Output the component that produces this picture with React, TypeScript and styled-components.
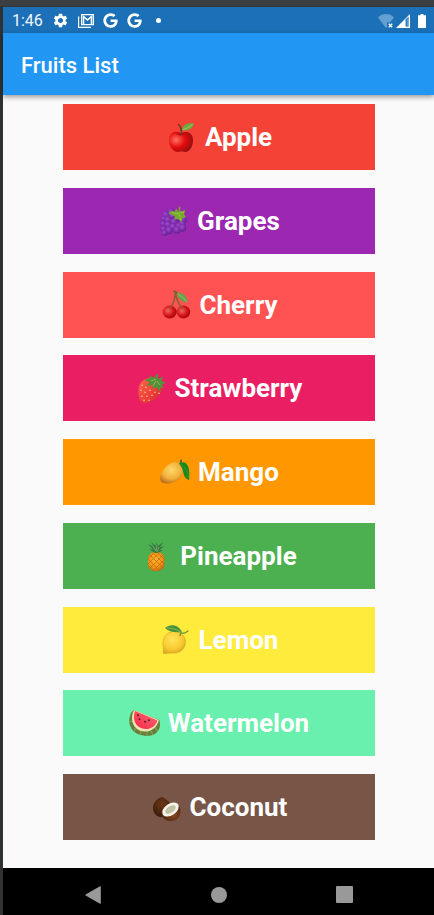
import React from "react";
import styled, { createGlobalStyle } from "styled-components";
import { MdSettings } from "react-icons/md";
import { FaGoogle } from "react-icons/fa";

const GlobalStyle = createGlobalStyle`
  * { box-sizing: border-box; }
  body { margin: 0; background: #fafafa; font-family: Roboto, sans-serif; }
`;

const Frame = styled.div`
  min-height: 100vh;
  display: flex;
  flex-direction: column;
  border-left: 3px solid #2f3133;
`;

const WindowEdge = styled.div`
  height: 7px;
  margin-left: -3px;
  background: #3c3f41;
  border-bottom: 1px solid #333638;
`;

const StatusBar = styled.div`
  height: 26px;
  display: flex;
  align-items: center;
  justify-content: space-between;
  padding: 1px 8px 0 9px;
  background: #1b70b7;
  color: #fff;
`;

const Notifications = styled.div`
  display: flex;
  align-items: center;
  gap: 9px;
`;

const Clock = styled.time`
  font-size: 16px;
  line-height: 20px;
  color: #f0f6fb;
`;

const Dot = styled.span`
  width: 5px;
  height: 5px;
  margin-left: 5px;
  border-radius: 50%;
  background: #fff;
`;

const Signals = styled.div`
  display: flex;
  align-items: center;
  gap: 2px;
`;

const AppBar = styled.header`
  height: 62px;
  display: flex;
  align-items: center;
  padding: 4px 18px 0;
  background: #2196f3;
  color: #fff;
  box-shadow: 0 2px 5px rgba(0, 0, 0, 0.4);
`;

const Title = styled.h1`
  margin: 0;
  font-size: 22px;
  line-height: 28px;
  font-weight: 500;
`;

const List = styled.main`
  flex: 1;
  display: flex;
  flex-direction: column;
  justify-content: space-between;
  gap: 8px;
  padding: 9px 59px 28px 60px;
`;

const FruitButton = styled.button<{ $color: string }>`
  height: 66px;
  display: flex;
  align-items: center;
  justify-content: center;
  gap: 7px;
  padding: 0;
  border: 0;
  background: ${(p) => p.$color};
  color: #fff;
  font: bold 26px/32px Roboto, sans-serif;
  cursor: pointer;
`;

const FruitIcon = styled.svg`
  width: 32px;
  height: 32px;
  flex: none;
`;

const NavBar = styled.nav`
  height: 47px;
  display: flex;
  align-items: center;
  justify-content: space-between;
  padding: 6px 66px 0 66px;
  background: #000;
`;

const NavButton = styled.button`
  width: 48px;
  height: 40px;
  display: flex;
  align-items: center;
  justify-content: center;
  padding: 0;
  border: 0;
  background: none;
  color: #999;
  cursor: pointer;
`;

const Apple = () => (
  <>
    <defs>
      <radialGradient id="apple" cx=".3" cy=".4" r=".75">
        <stop offset="0" stopColor="#ff7263" />
        <stop offset=".5" stopColor="#e40b0b" />
        <stop offset="1" stopColor="#8e1010" />
      </radialGradient>
    </defs>
    <path d="M15 12C11 9.500 3 10.500 3 19c0 6 4 12 9 12 1.500 0 2-.4 3.500-.4s2 .4 3.500.4c5 0 8-6 8-12 0-8-7-9.500-12-7z" fill="url(#apple)" />
    <path d="M11 12.500q4 2.500 8-.5" stroke="#8e1414" strokeWidth="1.500" fill="none" opacity=".7" />
    <path d="M12.500 3.500q3 2.500 3 9" stroke="#61402b" strokeWidth="1.600" fill="none" strokeLinecap="round" />
    <path d="M16 9c1-6 6-7.500 12-6.500-1 5-6 8-12 6.500z" fill="#6fa83f" />
    <path d="M17 8.500q5-1 9.500-5" stroke="#a8cf70" strokeWidth=".8" fill="none" />
  </>
);

const grapeDots: [number, number][] = [
  [13, 7], [8, 10], [14, 11], [20, 13], [25, 15], [5.5, 14], [10, 15], [24, 19],
  [16, 17], [20.5, 21.5], [5, 19], [10, 20], [15, 22], [19, 25], [5.5, 24], [11, 25.5], [6.5, 28], [24.5, 23],
];
const Grapes = () => (
  <>
    <defs>
      <radialGradient id="grape" cx=".4" cy=".35" r=".7">
        <stop offset="0" stopColor="#a44bd2" />
        <stop offset=".6" stopColor="#792aa5" />
        <stop offset="1" stopColor="#5f2187" />
      </radialGradient>
    </defs>
    {grapeDots.map(([x, y]) => (
      <circle key={`${x}-${y}`} cx={x} cy={y} r={x > 6.5 ? 3.8 : 3} fill="url(#grape)" />
    ))}
    <path d="M20.500 7l.5-5.500 1.500.3L22 6.600l5.500-1.600-1.500 4 2 3.500-3.500.5-1 4-3.500-3-4 .5 1-3L10 8l4-2 3 .5 1-3z" fill="#77aa2c" />
    <path d="M14 7.500l7 1.500 2 6M21 8l5-1" stroke="#95c342" strokeWidth=".9" fill="none" />
  </>
);

const Cherry = () => (
  <>
    <defs>
      <radialGradient id="cherry" cx=".38" cy=".4" r=".7">
        <stop offset="0" stopColor="#ef6b60" />
        <stop offset=".55" stopColor="#d51317" />
        <stop offset="1" stopColor="#9b0509" />
      </radialGradient>
    </defs>
    <ellipse cx="22.500" cy="23" rx="6.800" ry="6.400" fill="url(#cherry)" />
    <ellipse cx="8.700" cy="23" rx="7" ry="6.400" fill="url(#cherry)" />
    <path d="M9 20q5-8 5.500-17M14.500 3q1 10 7 17" stroke="#82602f" strokeWidth="1.500" fill="none" />
    <path d="M12.500 2l4 2" stroke="#82602f" strokeWidth="2" />
    <path d="M16 4c6-1 10 3 10.500 9.500C20 13 17 9 16 4z" fill="#62a44b" />
    <path d="M17 5q5 3 8.500 7.500" stroke="#9aca74" strokeWidth=".8" fill="none" />
  </>
);

const Strawberry = () => (
  <>
    <defs>
      <linearGradient id="berry" x1="0" y1="0" x2="1" y2="1">
        <stop offset="0" stopColor="#fb6a4b" />
        <stop offset=".55" stopColor="#f0403a" />
        <stop offset="1" stopColor="#c9252b" />
      </linearGradient>
    </defs>
    <path d="M12 6C5 8 2.500 13 2.500 19c0 5 .5 9 3 11s6 1 9-.5C20 27 27 21 26.500 15 25 7 18 4 12 6z" fill="url(#berry)" />
    <path d="M6 13v.5M10 15v.5M5 18v.5M9 20v.5M14 18v.5M6 24v.5M11 24v.5M16 23v.5M19 20v.5M8 28v.5M13 28v.5M23 21v.5" stroke="#ffe0ae" strokeWidth="1.200" strokeLinecap="round" />
    <path d="M19 6l1-4 2 .2L22 7l5-2.500L25.500 9l4.500 1.500-4 2.500 2 3-4-.5.5 4.500-4-4.500-4 1.500 1-4-7 1 3-3.500L8.500 8l5.500-2-.5-2.500z" fill="#55903a" />
    <path d="M20 7l-5 2M21 9l3 4M20 9l-3 5" stroke="#8fba5b" strokeWidth=".9" />
  </>
);

const Mango = () => (
  <>
    <defs>
      <radialGradient id="mango" cx=".48" cy=".38" r=".65">
        <stop offset="0" stopColor="#ffda67" />
        <stop offset=".6" stopColor="#f3b03c" />
        <stop offset="1" stopColor="#bd6d1b" />
      </radialGradient>
    </defs>
    <path d="M3 26.500c-3-2-2-8 1-12C8 8 15 4.500 21 6.500c5 2 5 9 1 14C17.500 27 9 29 3 26.500z" fill="url(#mango)" />
    <path d="M22 4.500v4" stroke="#5a6323" strokeWidth="1.800" strokeLinecap="round" />
    <path d="M20 7.500c6-4 12 1 10 16.500-5-2-5-5-6-9-.5-3-2-5-4-7.500z" fill="#188a1c" />
    <path d="M22 8q6 4 7.500 14" stroke="#3c992c" strokeWidth=".8" fill="none" />
  </>
);

const Pineapple = () => (
  <>
    <defs>
      <radialGradient id="pine" cx=".45" cy=".4" r=".65">
        <stop offset="0" stopColor="#ffb433" />
        <stop offset=".65" stopColor="#f39214" />
        <stop offset="1" stopColor="#bb6511" />
      </radialGradient>
      <clipPath id="pineBody">
        <rect x="7" y="12" width="16.500" height="19" rx="7" />
      </clipPath>
    </defs>
    <rect x="7" y="12" width="16.500" height="19" rx="7" fill="url(#pine)" />
    <g clipPath="url(#pineBody)" stroke="#b9670f" strokeWidth=".7">
      <path d="M3 15l18 18M6 12l18 18M10 11l16 16M15 11l10 10M3 20l6 13M28 15L10 33M25 12L7 30M20 11L4 27M15 11L5 21" />
    </g>
    <path d="M14 13L8 9l4 .5L7 4l6 3L10 2l5 4 .5-4L17 6l5-4-3 5.500 4-1.500-4 4 3 .5-6 2.500z" fill="#367b43" />
    <path d="M12 6l3 5 1-6M18 7l-2 5" stroke="#82b56d" strokeWidth=".8" fill="none" />
  </>
);

const Lemon = () => (
  <>
    <defs>
      <radialGradient id="lemon" cx=".42" cy=".35" r=".7">
        <stop offset="0" stopColor="#ffe55b" />
        <stop offset=".65" stopColor="#f9ca30" />
        <stop offset="1" stopColor="#d8a422" />
      </radialGradient>
    </defs>
    <path d="M20 8.500c5 3 7 10 4 15-2.500 4.500-7 6-12 5.500-3-.2-5 .8-8.500.5-.8-3 .5-4-.5-8C2 14 7 8 13 7.500c3 0 5 0 7 1z" fill="url(#lemon)" stroke="#d5a22a" strokeWidth=".6" />
    <path d="M28 7q-4 3.500-7 1.500l-1 3" stroke="#7d9a3a" strokeWidth="1.500" fill="none" strokeLinecap="round" />
    <path d="M5 4c6-5 14-3 17 4C15 9 9 8 5 4z" fill="#4b943b" />
    <path d="M7 4q8 0 14 4" stroke="#91bd59" strokeWidth=".8" fill="none" />
  </>
);

const Watermelon = () => (
  <>
    <defs>
      <linearGradient id="melon" x1="0" y1="1" x2="1" y2="0">
        <stop offset="0" stopColor="#fb294c" />
        <stop offset="1" stopColor="#f66a70" />
      </linearGradient>
    </defs>
    <path d="M4.500 3L2 6C-2 15 1 24 10 27.500c10 3.500 20 .5 21-9L30.500 13z" fill="#64803b" />
    <path d="M5 25l1.500-4M11 28l1-4M18 29v-4M24 28l-2-4M29 24l-3-3M.5 15l3-1" stroke="#8b9d54" strokeWidth="1.200" />
    <path d="M5 3C1 11 3 20 10.500 23.500 18 26.500 27 23.500 30 13z" fill="#f3e2b2" />
    <path d="M6 4C3.500 11 5.500 18.500 12 21c6 2.500 14 .5 16.500-7.500z" fill="url(#melon)" />
    <path d="M9 8v.5M10.500 12v.5M16 14.500v.5M20 13v.5" stroke="#35161f" strokeWidth="1.600" strokeLinecap="round" />
  </>
);

const Coconut = () => (
  <>
    <defs>
      <radialGradient id="coco" cx=".5" cy=".35" r=".65">
        <stop offset="0" stopColor="#6d3817" />
        <stop offset="1" stopColor="#3a1c0b" />
      </radialGradient>
      <radialGradient id="cocoHalf" cx=".6" cy=".6" r=".5">
        <stop offset="0" stopColor="#8a4a20" />
        <stop offset="1" stopColor="#572811" />
      </radialGradient>
    </defs>
    <path d="M11 6C7 7 2 11 2 17c0 6 5 10 10 9 6-1 8-5 8-10 0-5-5-8-9-10z" fill="url(#coco)" />
    <path d="M27 13c5 7 2 16-6 17-5 .5-9-2-10-6z" fill="url(#cocoHalf)" />
    <ellipse cx="19.500" cy="18.500" rx="9.300" ry="5.800" transform="rotate(-34 19.500 18.500)" fill="#f5f2e7" />
    <ellipse cx="19.500" cy="18.500" rx="6" ry="3.200" transform="rotate(-34 19.500 18.500)" fill="#c2c1a5" />
  </>
);

const fruits = [
  { name: "Apple", color: "#f44336", Art: Apple },
  { name: "Grapes", color: "#9c27b0", Art: Grapes },
  { name: "Cherry", color: "#ff5252", Art: Cherry },
  { name: "Strawberry", color: "#e91e63", Art: Strawberry },
  { name: "Mango", color: "#ff9800", Art: Mango },
  { name: "Pineapple", color: "#4caf50", Art: Pineapple },
  { name: "Lemon", color: "#ffeb3b", Art: Lemon },
  { name: "Watermelon", color: "#69f0ae", Art: Watermelon },
  { name: "Coconut", color: "#795548", Art: Coconut },
];

const MailIcon = () => (
  <svg width="16" height="14" viewBox="0 0 16 14" fill="none" stroke="#fff" aria-hidden="true">
    <path d="M.6 2.500v10.800h12.400" strokeWidth="1.200" />
    <path d="M3.600.7h11.800v10H3.600z" strokeWidth="1.200" />
    <path d="M5.500 10.500V2.500l4 3.500 4-3.500v8" strokeWidth="1.600" />
  </svg>
);

const WifiOffIcon = () => (
  <svg width="16" height="14" viewBox="0 0 16 14" aria-hidden="true">
    <path d="M0 3.500C4-1.100 12-1.100 16 3.500L12 8.500H9V13l-1 1z" fill="#649fd2" />
    <path d="M10.800 9.800l3.400 3.400M14.200 9.800l-3.400 3.400" stroke="#fff" strokeWidth="1.400" />
  </svg>
);

const CellIcon = () => (
  <svg width="14" height="14" viewBox="0 0 14 14" aria-hidden="true">
    <path d="M14 0v14H0z" fill="#fff" />
    <path d="M9.600 5.500L12.600 2.500v10h-3z" fill="#1b70b7" />
    <path d="M10.800 5v7.500h1.200V4z" fill="#5d9acd" />
  </svg>
);

const BatteryIcon = () => (
  <svg width="8" height="14" viewBox="0 0 8 14" aria-hidden="true">
    <path d="M2.500 0h3v1.300H8V14H0V1.300h2.500z" fill="#fff" />
  </svg>
);

const BatterySlot = styled.span`
  display: flex;
  margin-left: 6px;
`;

export default function App() {
  return (
    <Frame>
      <GlobalStyle />
      <WindowEdge />
      <StatusBar>
        <Notifications>
          <Clock>1:46</Clock>
          <MdSettings size={17} aria-hidden="true" />
          <MailIcon />
          <FaGoogle size={15} aria-hidden="true" />
          <FaGoogle size={15} aria-hidden="true" />
          <Dot />
        </Notifications>
        <Signals>
          <WifiOffIcon />
          <CellIcon />
          <BatterySlot>
            <BatteryIcon />
          </BatterySlot>
        </Signals>
      </StatusBar>
      <AppBar>
        <Title>Fruits List</Title>
      </AppBar>
      <List>
        {fruits.map(({ name, color, Art }) => (
          <FruitButton key={name} type="button" $color={color}>
            <FruitIcon viewBox="0 0 32 32" aria-hidden="true">
              <Art />
            </FruitIcon>
            {name}
          </FruitButton>
        ))}
      </List>
      <NavBar aria-label="System">
        <NavButton type="button" aria-label="Back">
          <svg width="16" height="18" viewBox="0 0 16 18" fill="currentColor">
            <path d="M15 .3Q15.800 0 15.800 1v16q0 1-.8.700L.6 9.600Q0 9 .6 8.400z" />
          </svg>
        </NavButton>
        <NavButton type="button" aria-label="Home">
          <svg width="16" height="16" viewBox="0 0 16 16" fill="currentColor">
            <circle cx="8" cy="8" r="8" />
          </svg>
        </NavButton>
        <NavButton type="button" aria-label="Recent apps">
          <svg width="17" height="17" viewBox="0 0 17 17" fill="currentColor">
            <rect width="17" height="17" rx="1" />
          </svg>
        </NavButton>
      </NavBar>
    </Frame>
  );
}
